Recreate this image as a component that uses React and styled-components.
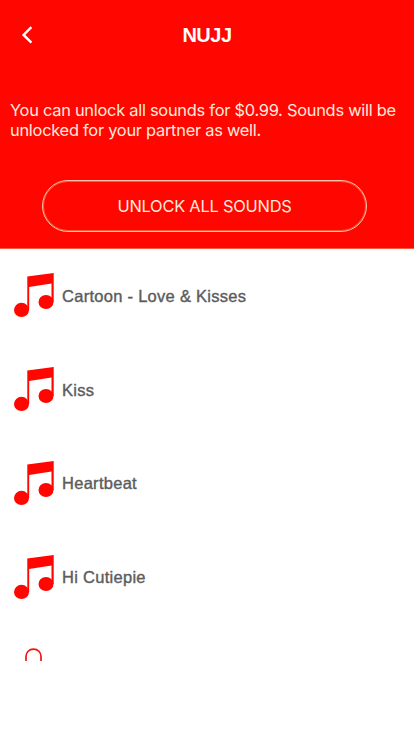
import React from "react";
import styled, { createGlobalStyle } from "styled-components";

const sounds = ["Cartoon - Love & Kisses", "Kiss", "Heartbeat", "Hi Cutiepie"];

const NoteIcon = () => (
  <svg width="40" height="45" viewBox="0 0 40 45" fill="#ff0600">
    <path d="M13.3 3.4L39.7 0V29H37.5V10.5L15.2 13.9V37H13.3Z" />
    <ellipse cx="7.5" cy="36.9" rx="7.5" ry="7.1" />
    <ellipse cx="32" cy="29" rx="7.5" ry="7" />
  </svg>
);

const App = () => {
  return (
    <Main>
      <GlobalStyle />
      <Header>
        <NavBar>
          <BackBtn aria-label="Back">
            <svg width="12" height="18" viewBox="0 0 12 18" fill="none">
              <path d="M10.4 1.2L2.6 8.9L10.4 16.6" stroke="#fff" strokeWidth="2.4" />
            </svg>
          </BackBtn>
          <Title>NUJJ</Title>
        </NavBar>
        <Info>
          You can unlock all sounds for $0.99. Sounds will be
          <br />
          unlocked for your partner as well.
        </Info>
        <UnlockBtn>UNLOCK ALL SOUNDS</UnlockBtn>
      </Header>
      <List>
        {sounds.map((sound) => (
          <Row key={sound}>
            <NoteIcon />
            <Name>{sound}</Name>
          </Row>
        ))}
        <LockedRow>
          <svg width="17" height="13" viewBox="0 0 17 13" fill="none">
            <path
              d="M1 13V8.6C1 4.2 4.2 1.2 8.5 1.2S16 4.2 16 8.6V13"
              stroke="#ee1512"
              strokeWidth="1.7"
            />
          </svg>
        </LockedRow>
      </List>
    </Main>
  );
};

const GlobalStyle = createGlobalStyle`
  * {
    box-sizing: border-box;
  }
  body {
    margin: 0;
    background-color: #fff;
  }
`;

const Main = styled.div`
  height: 736px;
  overflow: hidden;
  background-color: #fff;
  font-family: "Inter", sans-serif;
`;

const Header = styled.div`
  display: flex;
  flex-direction: column;
  height: 249px;
  background-color: #ff0600;
  border-bottom: 1px solid #ff5a3c;
`;

const NavBar = styled.div`
  display: grid;
  grid-template-columns: 60px 1fr 60px;
  align-items: center;
  height: 70px;
`;

const BackBtn = styled.button`
  display: flex;
  padding: 0 0 0 21px;
  border: none;
  background: none;
`;

const Title = styled.h1`
  margin: 0;
  color: #fff;
  font-family: "Liberation Sans", sans-serif;
  font-weight: 700;
  font-size: 20px;
  letter-spacing: -0.5px;
  text-align: center;
`;

const Info = styled.p`
  margin: 31px 0 0 10px;
  color: #ffeadd;
  font-size: 16.4px;
  line-height: 19.5px;
  letter-spacing: -0.26px;
  white-space: nowrap;
`;

const UnlockBtn = styled.button`
  width: 325px;
  height: 52px;
  margin: 40px 0 0 42px;
  padding: 0;
  border: 1px solid #ffc5a8;
  border-radius: 26px;
  box-shadow: inset 0 0 0 1px #ff5a3a;
  background: none;
  color: #ffeadd;
  font-family: inherit;
  font-size: 16.4px;
  letter-spacing: -0.22px;
`;

const List = styled.div`
  display: flex;
  flex-direction: column;
`;

const Row = styled.div`
  display: flex;
  align-items: center;
  height: 93.8px;
  padding-left: 14px;
`;

const Name = styled.span`
  margin-left: 8px;
  padding-top: 1px;
  color: #5c5c5c;
  font-family: "Liberation Sans", sans-serif;
  font-size: 16.5px;
  letter-spacing: 0.28px;
  -webkit-text-stroke: 0.4px #5c5c5c;
`;

const LockedRow = styled.div`
  padding: 24px 0 0 25px;
  line-height: 0;
`;

export default App;
